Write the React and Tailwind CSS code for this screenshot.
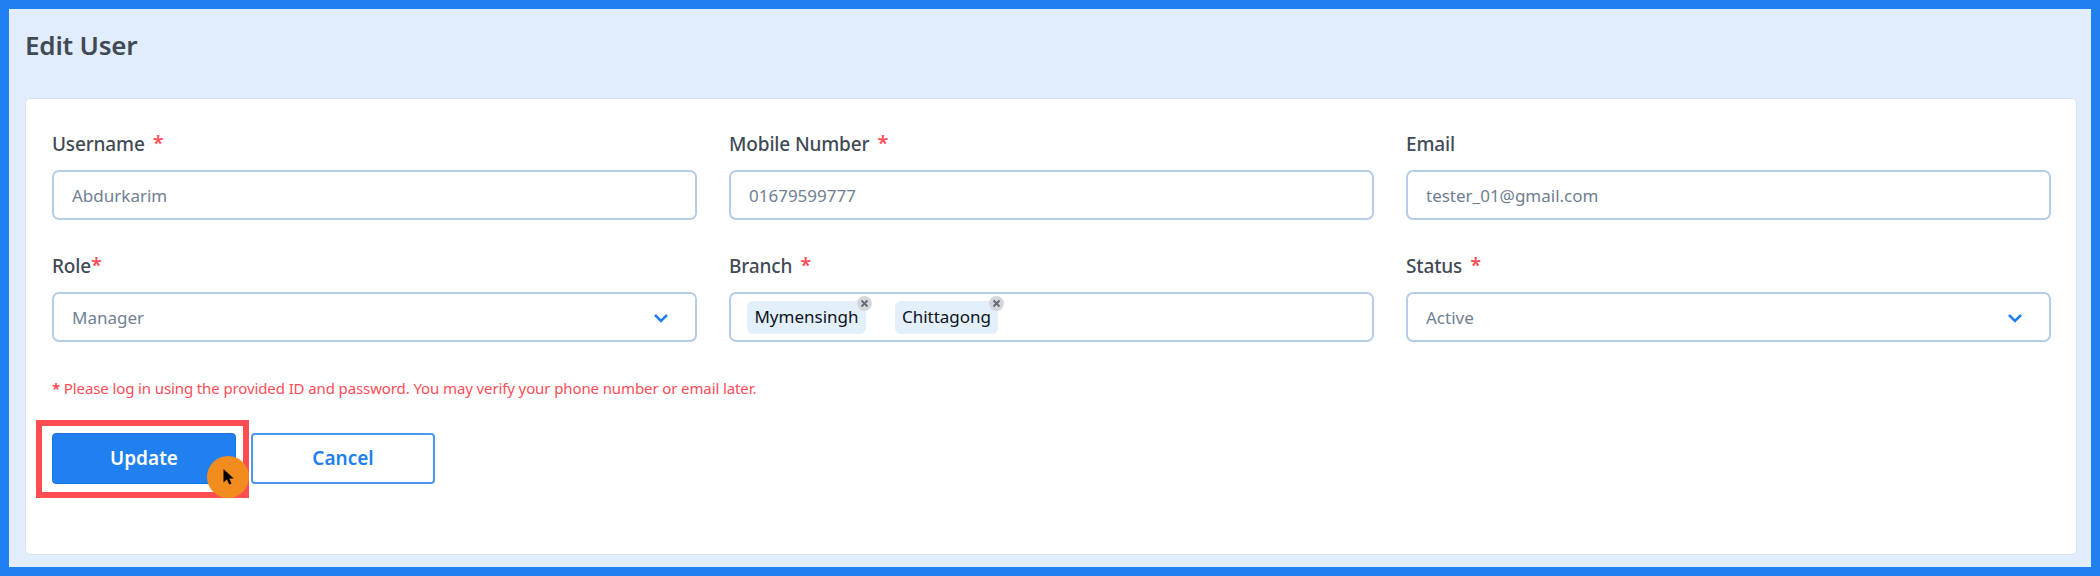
import React from "react";

const Star = ({ tight }) => (
  <span className={`text-[#ff4d57] text-[20px] font-semibold leading-none relative top-[-1px] ${tight ? "" : "ml-[8px]"}`}>*</span>
);

const Label = ({ text, req, tight }) => (
  <div className="h-[28px] flex items-center text-[19px] font-medium text-[#3f4a56] leading-none tracking-[-0.15px]">
    <span>{text}</span>
    {req && <Star tight={tight} />}
  </div>
);

const Chevron = () => (
  <svg width="16" height="16" viewBox="0 0 16 16" fill="none" className="shrink-0 relative top-[1px]">
    <path d="M2 5 8 11l6-6" stroke="#1f7ff0" strokeWidth="2.5" />
  </svg>
);

const Box = ({ children, className = "" }) => (
  <div className={`h-[50px] mt-[12px] border-2 border-[#b5cde8] rounded-[7px] bg-white flex items-center text-[17px] text-[#6f7f92] ${className}`}>
    {children}
  </div>
);

const Field = ({ label, req, tight, value, select }) => (
  <div>
    <Label text={label} req={req} tight={tight} />
    <Box className={select ? "pl-[18px] pr-[26px] justify-between" : "pl-[18px]"}>
      <span className="relative top-[1px]">{value}</span>
      {select && <Chevron />}
    </Box>
  </div>
);

const Tag = ({ text, className = "" }) => (
  <span className={`relative h-[33px] rounded-[6px] bg-[#e4effc] text-[#0b1420] text-[17px] flex items-center justify-center ${className}`}>
    {text}
    <span className="absolute right-[-6px] top-[-5px] w-[15px] h-[15px] rounded-full bg-[#d4d6da] flex items-center justify-center">
      <svg width="9" height="9" viewBox="0 0 9 9" fill="none">
        <path d="M1.5 1.5l6 6M7.5 1.5l-6 6" stroke="#5f6b7a" strokeWidth="1.8" />
      </svg>
    </span>
  </span>
);

export default function App() {
  return (
    <div
      className="w-[2100px] h-[576px] border-[9px] border-[#2080f0] bg-[#e1edfc] pl-[16px] pr-[14px] pb-[12px] flex flex-col overflow-hidden"
      style={{ fontFamily: '"Noto Sans", sans-serif' }}
    >
      <h1 className="h-[89px] pt-[20px] text-[26px] leading-[32px] font-semibold text-[#3f4a56] tracking-[-0.2px]">Edit User</h1>
      <div className="relative flex-1 bg-white border border-[#dbe1e8] rounded-[5px] pt-[31px] pl-[26px] pr-[25px]">
        <div className="grid grid-cols-3 gap-x-[32px] gap-y-[32px]">
          <Field label="Username" req value="Abdurkarim" />
          <Field label="Mobile Number" req value="01679599777" />
          <Field label="Email" value="tester_01@gmail.com" />
          <Field label="Role" req tight value="Manager" select />
          <div>
            <Label text="Branch" req />
            <Box className="pl-[16px]">
              <Tag text="Mymensingh" className="w-[119px]" />
              <Tag text="Chittagong" className="ml-[29px] w-[103px]" />
            </Box>
          </div>
          <Field label="Status" req value="Active" select />
        </div>
        <p className="mt-[35px] h-[22px] text-[15px] leading-[22px] text-[#ff4d57] tracking-[-0.11px]">
          <span className="font-bold">*</span> Please log in using the provided ID and password. You may verify your phone number or email later.
        </p>
        <div className="mt-[34px] flex gap-[15px]">
          <button className="relative w-[184px] h-[51px] rounded-[4px] bg-[#2080f0] border border-[#1a74e0] text-white text-[19px] font-semibold">
            Update
            <span className="absolute left-[-17px] top-[-14px] w-[213px] h-[78px] border-[6px] border-[#ff4d52]" />
            <span className="absolute left-[154px] top-[22px] w-[42px] h-[42px] rounded-full bg-[#f28c1e] flex items-center justify-center">
              <svg width="14" height="20" viewBox="0 0 14 20" className="relative left-[1px] top-[0px]">
                <path d="M1.5 2v13.5l3.4-3 2.4 5 2.3-1-2.3-5h4.4z" fill="#000" />
              </svg>
            </span>
          </button>
          <button className="w-[184px] h-[51px] rounded-[4px] bg-white border-2 border-[#4c97f2] text-[#2080f0] text-[19px] font-semibold">
            Cancel
          </button>
        </div>
      </div>
    </div>
  );
}
